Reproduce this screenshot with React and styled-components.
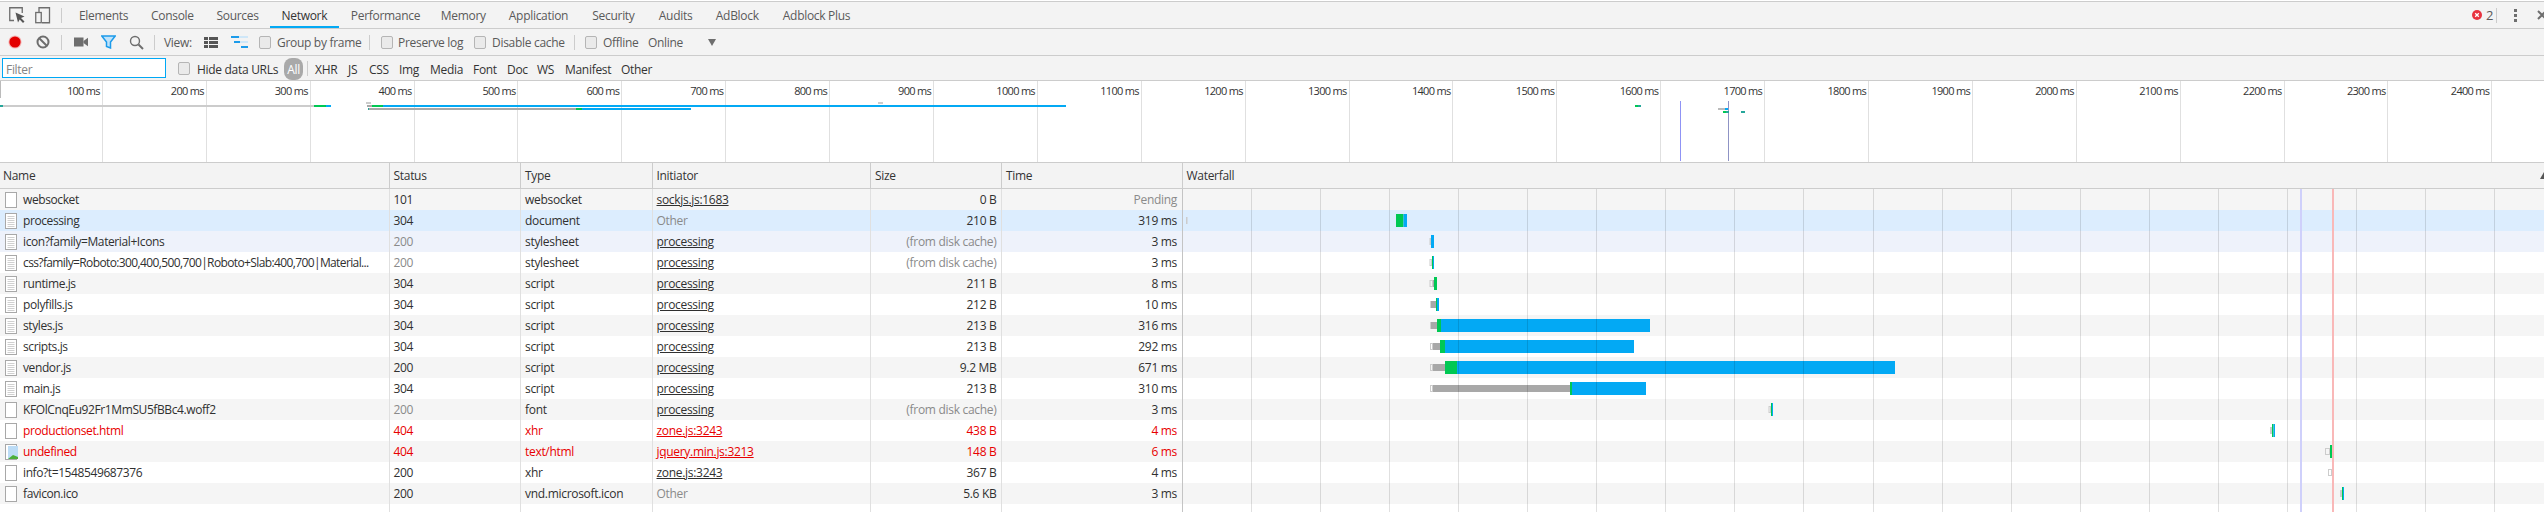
import React from 'react';
import styled, { createGlobalStyle } from 'styled-components';

const Global = createGlobalStyle`
  html, body { margin: 0; padding: 0; background: #fff; overflow: hidden; }
  body { font-family: "Open Sans", "Noto Sans", "Liberation Sans", sans-serif; font-size: 12px; letter-spacing: -0.3px; color: #303030; }
`;

const Page = styled.div`
  width: 2544px; height: 512px; padding-top: 1px; box-sizing: border-box;
  display: flex; flex-direction: column; overflow: hidden; background: #fff;
`;
const BarBase = styled.div`
  display: flex; align-items: center; flex: none; background: #f3f3f3;
  border-bottom: 1px solid #ccc; box-sizing: border-box; white-space: nowrap;
`;
const TabBar = styled(BarBase)`
  height: 28px; border-top: 1px solid #ccc; padding-left: 9px; color: #5a5a5a;
`;
const Toolbar = styled(BarBase)` height: 27px; padding-left: 8px; color: #5a5a5a; `;
const FilterBar = styled(BarBase)` height: 25px; padding-left: 2px; color: #333; `;
const Slot = styled.span`
  flex: none; width: ${p => p.$w}px; display: flex; align-items: center; height: 100%;
  margin-left: ${p => p.$ml || 0}px;
  & > svg { flex: none; }
`;
const FilterLabel = styled(Slot)` box-sizing: border-box; padding-top: 2px; `;
const Tab = styled.span`
  flex: none; width: ${p => p.$w}px; height: 100%; box-sizing: border-box; padding-left: 11.5px;
  display: flex; align-items: center; position: relative; color: ${p => p.$active ? '#333' : '#5a5a5a'};
  ${p => p.$active && `&::after { content: ""; position: absolute; left: 0; right: 0; bottom: 0; height: 2px; background: #03a9f4; }`}
`;
const Divider = styled.span` display: block; width: 1px; height: 15px; background: #ccc; `;
const RightGroup = styled.div`
  margin-left: auto; display: flex; align-items: center; height: 100%; width: 72px; flex: none; color: #5a5a5a; font-size: 13px;
`;
const Check = styled.span`
  display: block; width: 10px; height: 11px; background: #eaeaea; border: 1px solid #b5b5b5; border-radius: 2px;
`;
const FilterInput = styled.div`
  flex: none; width: 164px; height: 20px; box-sizing: border-box; border: 1px solid #00a8f5; background: #fff;
  color: #858585; padding: 2px 0 0 3px; display: flex; align-items: center; margin-right: 12px;
`;
const Pill = styled.span`
  flex: none; width: 19px; height: 22px; border-radius: 8px; background: #a9a9a9; color: #fff;
  display: flex; align-items: center; justify-content: center; align-self: flex-end;
`;

const Overview = styled.div`
  position: relative; height: 82px; flex: none; display: flex; box-sizing: border-box;
  border-bottom: 1px solid #ccc; background: #fff; overflow: hidden;
`;
const OverviewCell = styled.div`
  flex: none; width: 103.9px; box-sizing: border-box; border-right: 1px solid #e0e0e0; text-align: right;
  padding: 2px 2px 0 0; line-height: 16px; color: #333; font-size: 11px; letter-spacing: -0.7px;
  &:first-child { width: 102.9px; }
`;
const OverviewSvg = styled.svg` position: absolute; left: 0; top: 0; pointer-events: none; `;

const Table = styled.div` position: relative; flex: 1; display: flex; flex-direction: column; min-height: 0; `;
const Cols = styled.div`
  display: grid; grid-template-columns: 388.5px 131.5px 131.5px 218.5px 131px 180.5px 1fr; flex: none;
`;
const HeaderRow = styled(Cols)`
  height: 26px; box-sizing: border-box; background: #f3f3f3; border-bottom: 1px solid #ccc; position: relative;
`;
const HeaderCell = styled.div`
  padding-left: 4px; display: flex; align-items: center; border-left: 1px solid #ccc; color: #333; overflow: hidden;
  &:first-child { border-left: 0; padding-left: 3px; }
`;
const Row = styled(Cols)`
  height: 21px; background: ${p => p.$bg}; color: ${p => p.$red ? '#e80000' : '#303030'};
`;
const Filler = styled(Cols)` flex: 1; background: #fff; `;
const Cell = styled.div`
  box-sizing: border-box; padding: 0 4px 0 4px; display: flex; align-items: center; white-space: nowrap; overflow: hidden;
  justify-content: ${p => p.$right ? 'flex-end' : 'flex-start'};
  border-left: 1px solid ${p => p.$strong ? '#c4c4c4' : '#e0e0e0'};
  color: ${p => p.$dim ? '#8a8a8a' : 'inherit'};
  padding-right: ${p => p.$right ? '4.5px' : '4px'};
  &:first-child { border-left: 0; padding-left: 5px; }
`;
const Link = styled.span` text-decoration: underline; `;
const Name = styled.span`
  margin-left: 5px; letter-spacing: ${p => p.$long ? '-0.62px' : '-0.4px'};
`;
const WaterfallSvg = styled.svg` position: absolute; left: 1182px; top: 26px; pointer-events: none; `;
const SortArrow = styled.svg` position: absolute; right: 0; top: 9px; `;

const G = '#6e6e6e';
const InspectIcon = () => (
  <svg width="17" height="17" viewBox="0 0 17 17">
    <path d="M5 13.5H.75V.75h12.5V6" fill="none" stroke={G} strokeWidth="1.3" />
    <path d="M6.5 5.5 15.5 9.5 12 11 15.5 14.5 14 16 10.7 12.5 9 15.5Z" fill="#555" />
  </svg>
);
const DeviceIcon = () => (
  <svg width="16" height="17" viewBox="0 0 16 17">
    <path d="M4 5V.75h10.5v15H7" fill="none" stroke={G} strokeWidth="1.3" />
    <rect x=".75" y="5.5" width="5.5" height="10.2" fill="none" stroke={G} strokeWidth="1.3" />
  </svg>
);
const RecordIcon = () => (
  <svg width="14" height="16" viewBox="0 0 14 16">
    <circle cx="7" cy="8" r="6.6" fill="#f6b5b5" />
    <circle cx="7" cy="8" r="5.6" fill="#e30000" />
  </svg>
);
const ClearIcon = () => (
  <svg width="14" height="14" viewBox="0 0 14 14">
    <circle cx="7" cy="7" r="5.5" fill="none" stroke={G} strokeWidth="2" />
    <path d="M3 3 11 11" stroke={G} strokeWidth="2" />
  </svg>
);
const CameraIcon = () => (
  <svg width="14" height="10" viewBox="0 0 14 10"><rect width="9.5" height="9" y=".5" fill={G} /><path d="M9.5 4 14 .8V9.2L9.5 6Z" fill={G} /></svg>
);
const FunnelIcon = () => (
  <svg width="15" height="14" viewBox="0 0 15 14">
    <path d="M.8 1h13.4L9.5 7v6L5.5 11.5V7Z" fill="#bfe3fb" stroke="#1c9bea" strokeWidth="1.5" />
  </svg>
);
const SearchIcon = () => (
  <svg width="15" height="15" viewBox="0 0 15 15">
    <circle cx="6" cy="6" r="4.5" fill="none" stroke={G} strokeWidth="1.4" />
    <path d="M9.5 9.5 14 14" stroke={G} strokeWidth="2" />
  </svg>
);
const ListIcon = () => (
  <svg width="14" height="11" viewBox="0 0 14 11" fill="#555">
    <rect width="4" height="3" /><rect x="5" width="9" height="3" />
    <rect y="4" width="4" height="3" /><rect x="5" y="4" width="9" height="3" />
    <rect y="8" width="4" height="3" /><rect x="5" y="8" width="9" height="3" />
  </svg>
);
const WaterfallIcon = () => (
  <svg width="17" height="12" viewBox="0 0 17 12">
    <rect width="8" height="2" fill="#1c9bea" /><rect x="8" width="9" height="2" fill="#cfe7f8" />
    <rect x="3" y="5" width="6" height="2" fill="#1c9bea" /><rect x="9" y="5" width="8" height="2" fill="#cfe7f8" />
    <rect x="10" y="10" width="7" height="2" fill="#1c9bea" />
  </svg>
);
const DownCaret = () => <svg width="8" height="7" viewBox="0 0 8 7"><path d="M0 0h8L4 7Z" fill={G} /></svg>;
const ErrorIcon = () => (
  <svg width="10" height="10" viewBox="0 0 10 10">
    <circle cx="5" cy="5" r="5" fill="#e8333f" />
    <path d="M3.2 3.2 6.8 6.8M6.8 3.2 3.2 6.8" stroke="#fff" strokeWidth="1.3" />
  </svg>
);
const KebabIcon = () => (
  <svg width="3" height="13" viewBox="0 0 3 13" fill={G}><rect width="3" height="3" /><rect y="5" width="3" height="3" /><rect y="10" width="3" height="3" /></svg>
);
const CloseIcon = () => (
  <svg width="10" height="10" viewBox="0 0 10 10"><path d="M1 1 9 9M9 1 1 9" stroke={G} strokeWidth="2" /></svg>
);
const FileIcon = ({ kind }) => (
  <svg width="13" height="16" viewBox="0 0 13 16" style={{ flex: 'none' }}>
    <rect x=".5" y=".5" width="11" height="15" fill="#fff" stroke="#a8a8a8" />
    {kind === 'lined' && [3, 5, 7, 9, 11, 13].map(y => (
      <rect key={y} x="2.5" y={y} width="7" height="1" fill="#d0d0d0" />
    ))}
    {kind === 'image' && <>
      <rect x="3" y="2" width="10" height="13" fill="#bcdcf6" />
      <path d="M3 15 8 11 13 13V15Z" fill="#4caf3a" />
    </>}
  </svg>
);

const tabs = [
  ['Elements', 72], ['Console', 65.5], ['Sources', 65], ['Network', 69.3], ['Performance', 90],
  ['Memory', 68], ['Application', 83.5], ['Security', 66.5], ['Audits', 57], ['AdBlock', 67], ['Adblock Plus', 90],
];
const filters = [['XHR', 33], ['JS', 21], ['CSS', 30], ['Img', 31], ['Media', 43], ['Font', 34], ['Doc', 30], ['WS', 28], ['Manifest', 56], ['Other', 50]];

const P = 'processing';
const rows = [
  { n: 'websocket', k: 'blank', s: '101', t: 'websocket', i: 'sockjs.js:1683', z: '0 B', m: 'Pending', mDim: true },
  { n: 'processing', k: 'lined', s: '304', t: 'document', i: 'Other', iDim: true, z: '210 B', m: '319 ms', bg: '#dcedfe' },
  { n: 'icon?family=Material+Icons', k: 'lined', s: '200', sDim: true, t: 'stylesheet', i: P, z: '(from disk cache)', zDim: true, m: '3 ms', bg: '#eef2fb' },
  { n: 'css?family=Roboto:300,400,500,700|Roboto+Slab:400,700|Material...', long: true, k: 'lined', s: '200', sDim: true, t: 'stylesheet', i: P, z: '(from disk cache)', zDim: true, m: '3 ms' },
  { n: 'runtime.js', k: 'lined', s: '304', t: 'script', i: P, z: '211 B', m: '8 ms' },
  { n: 'polyfills.js', k: 'lined', s: '304', t: 'script', i: P, z: '212 B', m: '10 ms' },
  { n: 'styles.js', k: 'lined', s: '304', t: 'script', i: P, z: '213 B', m: '316 ms' },
  { n: 'scripts.js', k: 'lined', s: '304', t: 'script', i: P, z: '213 B', m: '292 ms' },
  { n: 'vendor.js', k: 'lined', s: '200', t: 'script', i: P, z: '9.2 MB', m: '671 ms' },
  { n: 'main.js', k: 'lined', s: '304', t: 'script', i: P, z: '213 B', m: '310 ms' },
  { n: 'KFOlCnqEu92Fr1MmSU5fBBc4.woff2', k: 'blank', s: '200', sDim: true, t: 'font', i: P, z: '(from disk cache)', zDim: true, m: '3 ms' },
  { n: 'productionset.html', k: 'blank', s: '404', t: 'xhr', i: 'zone.js:3243', z: '438 B', m: '4 ms', red: true },
  { n: 'undefined', k: 'image', s: '404', t: 'text/html', i: 'jquery.min.js:3213', z: '148 B', m: '6 ms', red: true },
  { n: 'info?t=1548549687376', k: 'blank', s: '200', t: 'xhr', i: 'zone.js:3243', z: '367 B', m: '4 ms' },
  { n: 'favicon.ico', k: 'blank', s: '200', t: 'vnd.microsoft.icon', i: 'Other', iDim: true, z: '5.6 KB', m: '3 ms' },
];

const GREEN = '#00c853';
const BLUE = '#03a9f4';
const GRAY = '#a8a8a8';
/* waterfall segments: row, kind, x0, x1 (page x) */
const wf = [
  [1, 'o', 1186, 1187.5],
  [1, 'g', 1396, 1403.5], [1, 'b', 1403.5, 1407],
  [2, 'o', 1429.5, 1431], [2, 'b', 1431, 1434],
  [3, 'o', 1429.5, 1432], [3, 'g', 1432, 1433], [3, 'b', 1433, 1434],
  [4, 'o', 1429.5, 1433], [4, 's', 1433, 1434], [4, 'g', 1434, 1437],
  [5, 's', 1430.5, 1436], [5, 'g', 1436, 1437], [5, 'b', 1437, 1439],
  [6, 's', 1430.5, 1437], [6, 'g', 1437, 1441], [6, 'b', 1441, 1650],
  [7, 'o', 1430, 1433], [7, 's', 1433, 1440], [7, 'g', 1440, 1445], [7, 'b', 1445, 1634],
  [8, 'o', 1430, 1433], [8, 's', 1433, 1445], [8, 'g', 1445, 1457], [8, 'b', 1457, 1895],
  [9, 'o', 1430, 1433], [9, 's', 1433, 1570], [9, 'g', 1570, 1572], [9, 'b', 1572, 1646],
  [10, 'o', 1768.5, 1771], [10, 'g', 1771, 1772], [10, 'b', 1772, 1773],
  [11, 'o', 2270, 2272], [11, 'g', 2272, 2273.5], [11, 'b', 2273.5, 2275],
  [12, 'o', 2325, 2330], [12, 'g', 2330, 2332], [12, 'b', 2332, 2333],
  [13, 'o', 2328, 2332], [13, 'd', 2332, 2334],
  [14, 'o', 2340, 2342], [14, 'g', 2342, 2343], [14, 'b', 2343, 2344],
];
const wfFill = { g: GREEN, b: BLUE, d: '#2f7f8f' };

const overviewBars = [
  [0, 105, 3, 2, '#26a69a'], [3, 105, 311, 2, '#ccc'], [314, 105, 12, 2, GREEN], [326, 105, 5, 2, BLUE],
  [366, 102, 5, 2, '#ccc'], [367, 105, 5, 2, GRAY], [372, 105, 11, 2, GREEN], [383, 105, 683, 2, BLUE],
  [878, 102, 5, 2, '#ccc'],
  [368, 108, 1, 2, '#26a69a'], [369, 108, 207, 2, GRAY], [576, 108, 6, 2, GREEN], [582, 108, 109, 2, BLUE],
  [1635, 105, 3, 2, GREEN], [1638, 105, 3, 2, '#26a69a'],
  [1718, 108, 7, 2, '#bbb'], [1725, 108, 3, 2, BLUE], [1723, 111, 3, 2, GREEN], [1726, 111, 3, 2, '#26a69a'],
  [1741, 111, 4, 2, '#26a69a'],
];

const App = () => (
  <Page>
    <Global />
    <TabBar>
      <Slot $w={26}><InspectIcon /></Slot>
      <Slot $w={26}><DeviceIcon /></Slot>
      <Slot $w={6.5}><Divider /></Slot>
      {tabs.map(([t, w]) => <Tab key={t} $w={w} $active={t === 'Network'}>{t}</Tab>)}
      <RightGroup>
        <Slot $w={14}><ErrorIcon /></Slot>
        <Slot $w={10}>2</Slot>
        <Slot $w={18}><Divider /></Slot>
        <Slot $w={23}><KebabIcon /></Slot>
        <Slot $w={7}><CloseIcon /></Slot>
      </RightGroup>
    </TabBar>
    <Toolbar>
      <Slot $w={28}><RecordIcon /></Slot>
      <Slot $w={25}><ClearIcon /></Slot>
      <Slot $w={13}><Divider /></Slot>
      <Slot $w={27}><CameraIcon /></Slot>
      <Slot $w={28}><FunnelIcon /></Slot>
      <Slot $w={25}><SearchIcon /></Slot>
      <Slot $w={10}><Divider /></Slot>
      <Slot $w={40}>View:</Slot>
      <Slot $w={27}><ListIcon /></Slot>
      <Slot $w={28}><WaterfallIcon /></Slot>
      <Slot $w={18}><Check /></Slot>
      <Slot $w={92}>Group by frame</Slot>
      <Slot $w={12}><Divider /></Slot>
      <Slot $w={17}><Check /></Slot>
      <Slot $w={76}>Preserve log</Slot>
      <Slot $w={18}><Check /></Slot>
      <Slot $w={82}>Disable cache</Slot>
      <Slot $w={11}><Divider /></Slot>
      <Slot $w={18}><Check /></Slot>
      <Slot $w={45}>Offline</Slot>
      <Slot $w={60}>Online</Slot>
      <Slot $w={10}><DownCaret /></Slot>
    </Toolbar>
    <FilterBar>
      <FilterInput>Filter</FilterInput>
      <Slot $w={19}><Check /></Slot>
      <FilterLabel $w={87}>Hide data URLs</FilterLabel>
      <Pill>All</Pill>
      <Slot $w={8} $ml={4}><Divider /></Slot>
      {filters.map(([t, w]) => <FilterLabel key={t} $w={w}>{t}</FilterLabel>)}
    </FilterBar>
    <Overview>
      {Array.from({ length: 24 }, (_, i) => (
        <OverviewCell key={i}>{(i + 1) * 100} ms</OverviewCell>
      ))}
      <OverviewSvg width="2544" height="81" viewBox="0 81 2544 81">
        <rect x="0" y="81" width="1" height="17" fill="#bbb" />
        <rect x="1680" y="101" width="1" height="60" fill="#8f93f5" />
        <rect x="1728" y="101" width="1" height="60" fill="#8f93c5" />
        {overviewBars.map(([x, y, w, h, c], i) => <rect key={i} x={x} y={y} width={w} height={h} fill={c} />)}
      </OverviewSvg>
    </Overview>
    <Table>
      <HeaderRow>
        {['Name', 'Status', 'Type', 'Initiator', 'Size', 'Time', 'Waterfall'].map(h => <HeaderCell key={h}>{h}</HeaderCell>)}
        <SortArrow width="4" height="7" viewBox="0 0 4 7"><path d="M4 0V7H0Z" fill="#555" /></SortArrow>
      </HeaderRow>
      {rows.map((r, i) => (
        <Row key={r.n} $bg={r.bg || (i % 2 ? '#fff' : '#f5f5f5')} $red={r.red}>
          <Cell><FileIcon kind={r.k} /><Name $long={r.long}>{r.n}</Name></Cell>
          <Cell $dim={r.sDim}>{r.s}</Cell>
          <Cell>{r.t}</Cell>
          <Cell $dim={r.iDim}>{r.iDim ? r.i : <Link>{r.i}</Link>}</Cell>
          <Cell $right $dim={r.zDim}>{r.z}</Cell>
          <Cell $right $dim={r.mDim}>{r.m}</Cell>
          <Cell $strong />
        </Row>
      ))}
      <Filler>
        <Cell /><Cell /><Cell /><Cell /><Cell /><Cell /><Cell $strong />
      </Filler>
      <WaterfallSvg width="1362" height="323" viewBox="1182 0 1362 323">
        {wf.map(([row, kind, x0, x1], i) => {
          const top = row * 21;
          if (kind === 'o') return <rect key={i} x={x0 + 0.5} y={top + 7.5} width={Math.max(x1 - x0 - 1, 0.5)} height={6} fill="none" stroke="#ccc" />;
          if (kind === 's') return <rect key={i} x={x0} y={top + 7} width={x1 - x0} height={7} fill={GRAY} />;
          return <rect key={i} x={x0} y={top + 4} width={x1 - x0} height={13} fill={wfFill[kind]} />;
        })}
        {Array.from({ length: 19 }, (_, k) => (
          <rect key={k} x={Math.round(1251 + k * 69.06)} y="0" width="1" height="323" fill="#000" fillOpacity=".12" />
        ))}
        <rect x="2300" y="0" width="2" height="323" fill="#cfd0fb" />
        <rect x="2332" y="0" width="2" height="323" fill="#f9b8b8" />
      </WaterfallSvg>
    </Table>
  </Page>
);

export default App;
